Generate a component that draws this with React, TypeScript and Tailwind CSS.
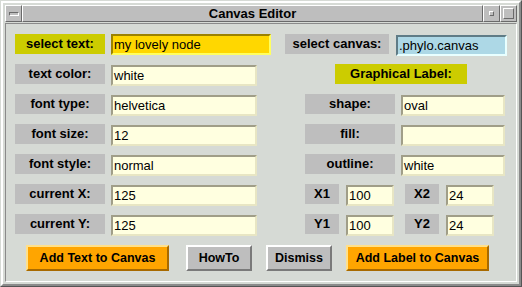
import React from "react";

const font = { fontFamily: '"Liberation Sans", Arial, sans-serif' };

function Label({ text, w, tone = "gray" }: { text: string; w: string; tone?: "gray" | "lime" }) {
  return (
    <div
      className={`${w} h-[20px] flex items-center justify-center text-[13px] font-bold text-black ${
        tone === "lime" ? "bg-[#cccc00]" : "bg-[#bebebe]"
      }`}
    >
      {text}
    </div>
  );
}

function Field({ value, w, tone = "ivory" }: { value: string; w: string; tone?: "ivory" | "gold" | "blue" }) {
  const skin =
    tone === "gold"
      ? "bg-[#ffd700] border-t-[#9c8200] border-l-[#9c8200] border-b-[#ffff60] border-r-[#ffff60]"
      : tone === "blue"
      ? "bg-[#add8e6] border-t-[#5f7c86] border-l-[#5f7c86] border-b-[#e8ffff] border-r-[#e8ffff]"
      : "bg-[#ffffe0] border-t-[#a09e88] border-l-[#a09e88] border-b-[#e8e6c4] border-r-[#e8e6c4]";
  return (
    <div className={`${w} h-[21px] border-2 ${skin} flex items-center pl-[1px] text-[13px] text-black`}>
      {value}
    </div>
  );
}

function Button({ text, w, tone = "gray" }: { text: string; w: string; tone?: "gray" | "orange" }) {
  const skin =
    tone === "orange"
      ? "bg-[#ffa500] border-t-[#ffe08a] border-l-[#ffe08a] border-b-[#a86a00] border-r-[#a86a00]"
      : "bg-[#bebebe] border-t-white border-l-white border-b-[#7a7a7a] border-r-[#7a7a7a]";
  return (
    <div className={`${w} h-[26px] border-2 ${skin} flex items-center justify-center text-[12.5px] font-bold text-black`}>
      {text}
    </div>
  );
}

export default function App() {
  return (
    <div style={font} className="w-[522px] h-[287px] bg-[#d6dad5] border border-t-[#d6dad5] border-l-[#d6dad5] border-b-[#555] border-r-[#555]">
      <div className="w-full h-full border-2 border-t-white border-l-white border-b-[#8a8a8a] border-r-[#8a8a8a] p-[2px] flex flex-col">
        {/* title bar */}
        <div className="h-[17px] flex">
          <div className="w-[17px] h-full bg-[#bebebe] border border-t-white border-l-white border-b-[#6a6a6a] border-r-[#6a6a6a] flex items-center justify-center">
            <div className="w-[10px] h-[4px] border border-t-[#6a6a6a] border-l-[#6a6a6a] border-b-white border-r-white" />
          </div>
          <div className="flex-1 h-full bg-[#bebebe] border border-t-white border-l-white border-b-[#6a6a6a] border-r-[#6a6a6a] flex items-center justify-center text-[13px] font-bold text-black">
            Canvas Editor
          </div>
          <div className="w-[17px] h-full bg-[#bebebe] border border-t-white border-l-white border-b-[#6a6a6a] border-r-[#6a6a6a] flex items-center justify-center">
            <div className="w-[5px] h-[5px] border border-t-white border-l-white border-b-[#6a6a6a] border-r-[#6a6a6a]" />
          </div>
          <div className="w-[17px] h-full bg-[#bebebe] border border-t-white border-l-white border-b-[#6a6a6a] border-r-[#6a6a6a] flex items-center justify-center">
            <div className="w-[11px] h-[11px] border border-t-white border-l-white border-b-[#6a6a6a] border-r-[#6a6a6a]" />
          </div>
        </div>

        {/* content */}
        <div className="flex-1 border border-t-[#8a8a8a] border-l-[#8a8a8a] border-b-white border-r-white mt-[1px] pl-[9px] pt-[10px] flex flex-col gap-[9px]">
          <div className="flex items-start h-[21px]">
            <Label text="select text:" w="w-[90px]" tone="lime" />
            <div className="ml-[6px]"><Field value="my lovely node" w="w-[160px]" tone="gold" /></div>
            <div className="ml-[14px]"><Label text="select canvas:" w="w-[104px]" /></div>
            <div className="ml-[7px] mt-[1px]"><Field value=".phylo.canvas" w="w-[111px]" tone="blue" /></div>
          </div>

          <div className="flex items-start h-[21px]">
            <Label text="text color:" w="w-[90px]" />
            <div className="ml-[6px] mt-[1px]"><Field value="white" w="w-[146px]" /></div>
            <div className="ml-[78px]"><Label text="Graphical Label:" w="w-[132px]" tone="lime" /></div>
          </div>

          {[
            ["font type:", "helvetica", "shape:", "oval"],
            ["font size:", "12", "fill:", ""],
            ["font style:", "normal", "outline:", "white"],
          ].map(([a, b, c, d]) => (
            <div key={a} className="flex items-start h-[21px]">
              <Label text={a} w="w-[90px]" />
              <div className="ml-[6px] mt-[1px]"><Field value={b} w="w-[146px]" /></div>
              <div className="ml-[48px]"><Label text={c} w="w-[90px]" /></div>
              <div className="ml-[6px] mt-[1px]"><Field value={d} w="w-[104px]" /></div>
            </div>
          ))}

          {[
            ["current X:", "125", "X1", "100", "X2", "24"],
            ["current Y:", "125", "Y1", "100", "Y2", "24"],
          ].map(([a, b, c, d, e, f]) => (
            <div key={a} className="flex items-start h-[21px]">
              <Label text={a} w="w-[90px]" />
              <div className="ml-[6px] mt-[1px]"><Field value={b} w="w-[146px]" /></div>
              <div className="ml-[48px]"><Label text={c} w="w-[34px]" /></div>
              <div className="ml-[7px] mt-[1px]"><Field value={d} w="w-[48px]" /></div>
              <div className="ml-[11px]"><Label text={e} w="w-[34px]" /></div>
              <div className="ml-[7px] mt-[1px]"><Field value={f} w="w-[48px]" /></div>
            </div>
          ))}

          <div className="flex items-start mt-[1px] pl-[11px]">
            <Button text="Add Text to Canvas" w="w-[143px]" tone="orange" />
            <div className="ml-[17px]"><Button text="HowTo" w="w-[66px]" /></div>
            <div className="ml-[14px]"><Button text="Dismiss" w="w-[66px]" /></div>
            <div className="ml-[14px]"><Button text="Add Label to Canvas" w="w-[143px]" tone="orange" /></div>
          </div>
        </div>
      </div>
    </div>
  );
}
